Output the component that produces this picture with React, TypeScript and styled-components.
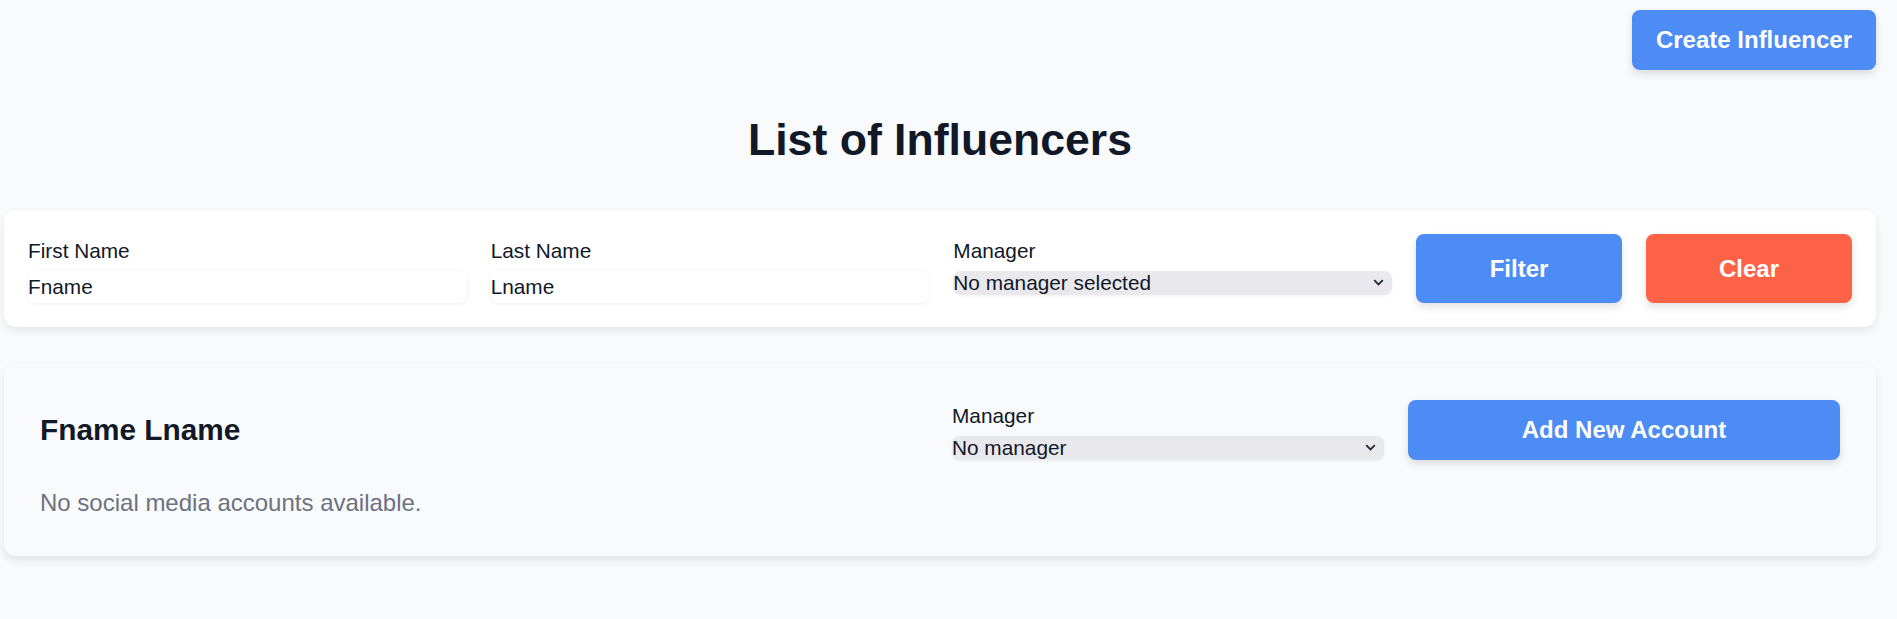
import React, { FC } from "react";
import styled, { createGlobalStyle } from "styled-components";

const GlobalStyle = createGlobalStyle`
  body {
    margin: 0;
    background: #f9fafb;
    font-family: "Liberation Sans", Arial, sans-serif;
    color: #111827;
  }
`;

const Page = styled.div`
  padding: 10px 21px 40px 4px;
`;

const TopBar = styled.div`
  display: flex;
  justify-content: flex-end;
`;

const Button = styled.button<{ $variant?: "primary" | "danger" }>`
  border: none;
  border-radius: 8px;
  background: ${({ $variant }) => ($variant === "danger" ? "#ff6347" : "#4d8cf5")};
  color: #ffffff;
  font-family: inherit;
  font-size: 24px;
  font-weight: 700;
  line-height: 28px;
  padding: 16px 24px;
  box-shadow: 0 4px 8px rgba(0, 0, 0, 0.12);
  cursor: pointer;
`;

const Title = styled.h1`
  margin: 44px 0 45px;
  text-align: center;
  font-size: 44.6px;
  font-weight: 700;
  line-height: 51px;
  color: #111827;
`;

const FilterCard = styled.div`
  display: grid;
  grid-template-columns: 1fr 1fr 1fr 206px 206px;
  gap: 24px;
  align-items: start;
  padding: 24px;
  background: #ffffff;
  border-radius: 12px;
  box-shadow: 0 4px 10px rgba(0, 0, 0, 0.08);
`;

const Field = styled.div<{ $offset?: number }>`
  display: flex;
  flex-direction: column;
  padding-top: ${({ $offset }) => $offset ?? 0}px;
`;

const Label = styled.label`
  font-size: 20.8px;
  line-height: 24px;
  margin-bottom: 8px;
  color: #111827;
`;

const TextInput = styled.input`
  height: 32px;
  padding: 0;
  border: none;
  border-radius: 8px;
  background: #ffffff;
  font-family: inherit;
  font-size: 20.8px;
  color: #111827;
  box-shadow: 0 1px 4px rgba(0, 0, 0, 0.07);
  outline: none;
`;

const SelectWrap = styled.div`
  position: relative;
`;

const Select = styled.select`
  width: 100%;
  height: 24px;
  padding: 0;
  border: none;
  border-radius: 8px;
  appearance: none;
  background: #e9e8ed;
  font-family: inherit;
  font-size: 20.8px;
  line-height: 24px;
  color: #111827;
  box-shadow: 0 1px 3px rgba(0, 0, 0, 0.06);
  outline: none;
`;

const Chevron = styled.svg`
  position: absolute;
  right: 8px;
  top: 8px;
  pointer-events: none;
`;

const FilterButton = styled(Button)`
  height: 69px;
  padding: 0;
`;

const InfluencerCard = styled.div`
  margin-top: 37px;
  padding: 36px 36px 39px 36px;
  background: #f9fafb;
  border-radius: 12px;
  box-shadow: 0 4px 10px rgba(0, 0, 0, 0.1);
`;

const CardHeader = styled.div`
  display: flex;
  align-items: center;
  gap: 24px;
`;

const Name = styled.h2`
  flex: 1;
  margin: 0;
  font-size: 29.8px;
  font-weight: 700;
  color: #111827;
`;

const ManagerField = styled(Field)`
  width: 432px;
  align-self: flex-end;
`;

const AddButton = styled(Button)`
  width: 432px;
  padding: 16px 0;
`;

const EmptyText = styled.p`
  margin: 29px 0 0;
  font-size: 24px;
  line-height: 27.6px;
  color: #6b7280;
`;

const ManagerSelect: FC<{ placeholder: string }> = ({ placeholder }) => (
  <SelectWrap>
    <Select defaultValue="">
      <option value="">{placeholder}</option>
    </Select>
    <Chevron width="11" height="7" viewBox="0 0 11 7">
      <path d="M1.2 1.2l4.3 4.3 4.3-4.3" fill="none" stroke="#1f2937" strokeWidth="1.8" />
    </Chevron>
  </SelectWrap>
);

const App: FC = () => {
  return (
    <Page>
      <GlobalStyle />
      <TopBar>
        <Button>Create Influencer</Button>
      </TopBar>
      <Title>List of Influencers</Title>
      <FilterCard>
        <Field $offset={5}>
          <Label>First Name</Label>
          <TextInput defaultValue="Fname" />
        </Field>
        <Field $offset={5}>
          <Label>Last Name</Label>
          <TextInput defaultValue="Lname" />
        </Field>
        <Field $offset={5}>
          <Label>Manager</Label>
          <ManagerSelect placeholder="No manager selected" />
        </Field>
        <FilterButton>Filter</FilterButton>
        <FilterButton $variant="danger">Clear</FilterButton>
      </FilterCard>
      <InfluencerCard>
        <CardHeader>
          <Name>Fname Lname</Name>
          <ManagerField>
            <Label>Manager</Label>
            <ManagerSelect placeholder="No manager" />
          </ManagerField>
          <AddButton>Add New Account</AddButton>
        </CardHeader>
        <EmptyText>No social media accounts available.</EmptyText>
      </InfluencerCard>
    </Page>
  );
};

export default App;
